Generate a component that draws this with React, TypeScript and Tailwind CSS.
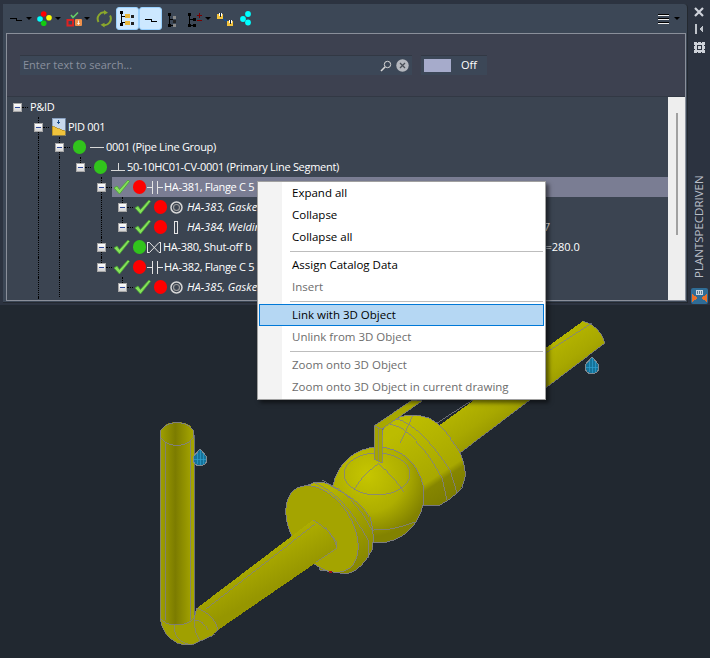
import React from "react";

const font = "font-['Open_Sans','Noto_Sans',sans-serif]";

function Caret() {
  return <svg width="6" height="22" viewBox="0 0 6 22" className="shrink-0"><path d="M0 10h6l-3 3z" fill="#000" /></svg>;
}
function Ic({ x, w, children, className = "" }: { x: number; w: number; children?: React.ReactNode; className?: string }) {
  return <svg width={w} height="22" viewBox={`${x} 7 ${w} 22`} className={`shrink-0 ${className}`} shapeRendering="crispEdges">{children}</svg>;
}
function LineIc({ x }: { x: number }) {
  return <Ic x={x} w={14}><path d={`M${x + 1} 18.5h6v2h6`} stroke="#000" fill="none" /></Ic>;
}

function Toolbar() {
  return (
    <div className="flex items-start h-[29px] pt-[3px] shrink-0">
      <div className="ml-[6px]"><LineIc x={9} /></div>
      <div className="ml-[3px]"><Caret /></div>
      <div className="ml-[4px]">
        <svg width="17" height="22" viewBox="36 7 17 22">
          <circle cx="43.7" cy="14" r="2.8" fill="#f00" /><circle cx="40" cy="19" r="2.8" fill="#0ff" /><circle cx="49" cy="17.7" r="2.8" fill="#ff0" /><circle cx="43.7" cy="23.3" r="2.8" fill="#1c1" />
        </svg>
      </div>
      <div className="ml-[2px]"><Caret /></div>
      <div className="ml-[4px]">
        <svg width="18" height="22" viewBox="65 7 18 22">
          <path d="M71 15l2 2.5 5-5" stroke="#6c6" strokeWidth="1.6" fill="none" />
          <rect x="67.5" y="20" width="5.5" height="5.5" fill="none" stroke="#d22" strokeWidth="2" />
          <rect x="75" y="19" width="7" height="7" rx="1" fill="#f0904a" />
          <path d="M78.5 20.5v3.5M77.3 23l1.2 1.5 1.2-1.5" stroke="#fff" strokeWidth=".8" fill="none" />
        </svg>
      </div>
      <div className="ml-[1px]"><Caret /></div>
      <div className="ml-[5px]">
        <svg width="18" height="22" viewBox="95 7 18 22">
          <path d="M98.5 22a6.5 6.5 0 0 1 7-9.5M110 15.5a6.5 6.5 0 0 1-7 9.5" stroke="#8ba82c" strokeWidth="2" fill="none" />
          <path d="M104 10l4 2.8-4 2zM104.500 27.500l-4-2.800 4-2z" fill="#8ba82c" />
        </svg>
      </div>
      <div className="ml-[3px] w-[23px] h-[23px] rounded-[3px] bg-[#cce8ff] border border-[#99d1ff] flex items-center justify-center">
        <svg width="15" height="15" viewBox="120 12 15 15" shapeRendering="crispEdges">
          <rect x="120" y="12" width="3" height="3" fill="#000" /><rect x="120" y="24" width="3" height="3" fill="#000" />
          <path d="M121.500 15v9M121.500 17.500h5M121.500 23.500h5" stroke="#000" fill="none" />
          <rect x="125" y="15" width="5" height="4" fill="#e8b73a" /><rect x="125" y="22" width="5" height="4" fill="#e8b73a" />
          <rect x="131" y="16" width="3" height="3" fill="#222" /><rect x="131" y="23" width="3" height="3" fill="#222" />
        </svg>
      </div>
      <div className="w-[23px] h-[23px] rounded-[3px] bg-[#cce8ff] border border-[#99d1ff] flex items-center justify-center">
        <Ic x={143} w={14}><path d="M144 18.500h6v2h6" stroke="#000" fill="none" /></Ic>
      </div>
      <div className="ml-[5px]">
        <Ic x={167} w={11}>
          <rect x="168" y="13" width="3" height="3" fill="#000" /><rect x="168" y="24" width="3" height="3" fill="#000" />
          <path d="M169.500 16v8M169.500 19.500h3M169.500 25.500h3" stroke="#000" fill="none" />
          <rect x="173" y="16" width="3" height="3" fill="#888" /><rect x="173" y="20" width="3" height="3" fill="#222" /><rect x="173" y="24" width="3" height="3" fill="#888" />
        </Ic>
      </div>
      <div className="ml-[9px]">
        <Ic x={187} w={16}>
          <rect x="188" y="13" width="3" height="3" fill="#000" /><rect x="188" y="24" width="3" height="3" fill="#000" />
          <path d="M189.500 16v8M189.500 19.500h3M189.500 25.500h3" stroke="#000" fill="none" />
          <rect x="193" y="18" width="3" height="3" fill="#000" /><rect x="193" y="24" width="3" height="3" fill="#000" />
          <path d="M197 15.500h5M199.500 13v5M197 20.500h5" stroke="#7a0000" fill="none" />
        </Ic>
      </div>
      <div className="ml-[2px]"><Caret /></div>
      <div className="ml-[5px]">
        <Ic x={216} w={18}>
          <rect x="217" y="14" width="6" height="5" fill="#f2c23c" /><rect x="219" y="13" width="3" height="3" fill="#fff" /><rect x="220" y="13" width="1" height="4" fill="#123" />
          <rect x="227" y="21" width="6" height="5" fill="#f2c23c" /><rect x="229" y="20" width="3" height="3" fill="#fff" /><rect x="230" y="20" width="1" height="4" fill="#123" />
          <path d="M223 19l4 2" stroke="#1c4f8a" strokeWidth="1.400" fill="none" />
        </Ic>
      </div>
      <div className="ml-[6px]">
        <svg width="12" height="22" viewBox="240 7 12 22">
          <circle cx="248" cy="14" r="2.900" fill="#0ff" /><circle cx="243" cy="19" r="2.900" fill="#0ff" /><circle cx="248" cy="22.500" r="2.900" fill="#0ff" />
        </svg>
      </div>
      <div className="ml-auto flex">
        <Ic x={657} w={12}>
          <path d="M657 14.500h11M657 18.500h11M657 22.500h11" stroke="#000" fill="none" />
          <path d="M657 15.500h11M657 19.500h11M657 23.500h11" stroke="#f0f0f0" fill="none" />
        </Ic>
        <div className="ml-[4px] mr-[7px]"><Caret /></div>
      </div>
    </div>
  );
}

function SearchBar() {
  return (
    <div className="flex items-center h-[62px] pl-[13px] bg-[#3d4150] gap-[9px] shrink-0">
      <div className={`flex items-center w-[392px] h-[20px] bg-[#3c4757] border-t border-[#323844] pl-[3px] pr-[3px] ${font}`}>
        <span className="text-[11px] text-[#8a909e]">Enter text to search...</span>
        <svg className="ml-auto" width="12" height="12" viewBox="0 0 12 12"><circle cx="7.500" cy="4.500" r="3.200" fill="none" stroke="#d8d8d8" /><path d="M5 7L1 11" stroke="#d8d8d8" strokeWidth="1.600" /></svg>
        <svg className="ml-[4px]" width="13" height="13" viewBox="0 0 13 13"><circle cx="6.500" cy="6.500" r="6.200" fill="#b4b7be" /><path d="M4 4l5 5M9 4l-5 5" stroke="#4a4f58" strokeWidth="1.300" /></svg>
      </div>
      <div className={`flex items-center w-[66px] h-[20px] bg-[#3c4757] border-t border-[#323844] pl-[3px] ${font}`}>
        <div className="w-[27px] h-[13px] bg-[#a6abcb]" />
        <span className="ml-[10px] text-[11px] text-white">Off</span>
      </div>
    </div>
  );
}

function Box() {
  return (
    <div className="relative z-10 w-[9px] h-[9px] bg-gradient-to-b from-[#ffffff] to-[#d4d4d4] border border-[#a6a6a6] flex items-center justify-center">
      <div className="w-[5px] h-[1px] bg-[#2f4a9c]" />
    </div>
  );
}
function Check() {
  return (
    <svg width="17" height="16" viewBox="0 0 17 16" className="shrink-0">
      <path d="M1 9L4 7 6.500 10.500 15 1 16.500 2.500 6.500 15z" fill="#86e05a" stroke="#45a532" strokeWidth=".8" strokeLinejoin="round" />
    </svg>
  );
}
function Sym({ kind }: { kind: string }) {
  if (kind === "dash") return <svg width="14" height="10" viewBox="0 0 14 10" className="shrink-0 ml-[3px] mr-[1px]" shapeRendering="crispEdges"><path d="M0 5.500h14" stroke="#d8d8d8" /></svg>;
  if (kind === "tee") return <svg width="14" height="14" viewBox="0 0 14 14" className="shrink-0 ml-[3px] mr-[2px]" shapeRendering="crispEdges"><path d="M0 10.500h14M7.500 3v7" stroke="#d8d8d8" /></svg>;
  if (kind === "flange") return <svg width="16" height="14" viewBox="0 0 16 14" className="shrink-0 mr-[1px]" shapeRendering="crispEdges"><path d="M0 7.500h5M5.500 1v13M10.500 1v13M11 7.500h5" stroke="#e4e4e4" /></svg>;
  if (kind === "ring") return <svg width="13" height="13" viewBox="0 0 13 13" className="shrink-0 ml-[2px] mr-[4px]"><circle cx="6.500" cy="6.500" r="5.500" fill="none" stroke="#d8d8d8" strokeWidth="1.500" /><circle cx="6.500" cy="6.500" r="3" fill="none" stroke="#9a9a9a" strokeWidth="1.200" /></svg>;
  if (kind === "bar") return <svg width="13" height="13" viewBox="0 0 13 13" className="shrink-0 ml-[2px] mr-[4px]" shapeRendering="crispEdges"><rect x="4.500" y=".5" width="3" height="12" fill="none" stroke="#e4e4e4" /></svg>;
  return <svg width="14" height="13" viewBox="0 0 14 13" className="shrink-0 mr-[2px]"><path d="M.5 1.500h2L12 11.500h1.500M.5 11.500h2L12 1.500h1.500M.5 1v11M13.500 1v11" stroke="#e4e4e4" fill="none" /></svg>;
}
function DocIc() {
  return (
    <svg width="15" height="18" viewBox="0 0 15 18" className="shrink-0" shapeRendering="crispEdges">
      <rect x="1" y="0" width="13" height="17" fill="#c7d9ee" stroke="#7a93b5" strokeWidth=".8" />
      <path d="M6 4h3M7.500 2v4" stroke="#1f4f8a" />
      <path d="M1 8l13 5v4H1z" fill="#f0c33c" stroke="#a07c10" strokeWidth=".6" />
    </svg>
  );
}

type Row = {
  cells: (0 | 1)[];
  box: number;
  up?: boolean;
  down?: boolean;
  sel?: boolean;
  check?: boolean;
  circle?: string;
  sym?: string;
  doc?: boolean;
  text?: string;
  italic?: boolean;
  tail?: string;
  tailAt?: number;
};

const rows: Row[] = [
  { cells: [], box: 0, text: "P&ID" },
  { cells: [], box: 1, up: true, down: true, doc: true, text: "PID 001" },
  { cells: [0, 1], box: 2, up: true, down: true, circle: "bg-[#31c41c]", sym: "dash", text: "0001 (Pipe Line Group)" },
  { cells: [0, 1, 1], box: 3, up: true, circle: "bg-[#31c41c]", sym: "tee", text: "50-10HC01-CV-0001 (Primary Line Segment)" },
  { cells: [0, 1, 1, 0], box: 4, up: true, down: true, sel: true, check: true, circle: "bg-[#f00]", sym: "flange", text: "HA-381, Flange C 5" },
  { cells: [0, 1, 1, 0, 1], box: 5, up: true, check: true, circle: "bg-[#f00]", sym: "ring", text: "HA-383, Gasket", italic: true },
  { cells: [0, 1, 1, 0, 1], box: 5, up: true, check: true, circle: "bg-[#f00]", sym: "bar", text: "HA-384, Welding", italic: true, tail: "7", tailAt: 277 },
  { cells: [0, 1, 1, 0], box: 4, up: true, down: true, check: true, circle: "bg-[#31c41c]", sym: "valve", text: "HA-380, Shut-off b", tail: "=280.0", tailAt: 294 },
  { cells: [0, 1, 1, 0], box: 4, up: true, check: true, circle: "bg-[#f00]", sym: "flange", text: "HA-382, Flange C 5" },
  { cells: [0, 1, 1, 0, 0], box: 5, up: true, check: true, circle: "bg-[#f00]", sym: "ring", text: "HA-385, Gasket", italic: true },
  { cells: [0, 1, 1], box: 2, circle: "bg-[#31c41c]" },
];

function V({ half }: { half?: "up" | "down" }) {
  const pos = half === "up" ? "top-0 h-1/2" : half === "down" ? "bottom-0 h-1/2" : "top-0 h-full";
  return <div className={`absolute left-[10px] w-0 border-l border-dotted border-black ${pos}`} />;
}

function TreeRow({ r }: { r: Row }) {
  const cols = [];
  for (let i = 0; i < r.box; i++) {
    cols.push(<div key={i} className="relative w-[21px] shrink-0 h-full">{r.cells[i] ? <V /> : null}</div>);
  }
  return (
    <div className="flex items-center h-[20px] shrink-0">
      {cols}
      <div className="relative w-[21px] shrink-0 h-full flex items-center pl-[6px]">
        {r.up ? <V half="up" /> : null}
        {r.down ? <V half="down" /> : null}
        <Box />
        <div className="absolute left-[15px] top-[10px] w-[6px] border-t border-dotted border-black" />
      </div>
      <div className={`flex items-center h-full flex-1 min-w-0 pl-[2px] ${r.sel ? "bg-[#7a7d93]" : ""}`}>
        {r.check ? <div className="mr-[3px] ml-[-1px]"><Check /></div> : null}
        {r.doc ? <div className="mr-[2px]"><DocIc /></div> : null}
        {r.circle ? <div className={`w-[13px] h-[14px] rounded-full shrink-0 mr-[1px] ${r.check ? "" : "ml-[1px]"} ${r.circle}`} /> : null}
        {r.sym ? <Sym kind={r.sym} /> : null}
        {r.text ? <span className={`text-[11px] text-white whitespace-nowrap ${r.sym === "dash" ? "ml-[1px]" : ""} ${r.italic ? "italic" : "tracking-[-0.3px]"}`}>{r.text}</span> : null}
        {r.tail ? <span className="text-[11px] text-white whitespace-nowrap" style={{ marginLeft: r.tailAt }}>{r.tail}</span> : null}
      </div>
    </div>
  );
}

function Tree() {
  return (
    <div className={`flex flex-1 min-h-0 border-t border-[#323844] ${font}`}>
      <div className="flex-1 min-w-0 bg-[#3b4451] flex flex-col overflow-hidden">
        <div className="flex flex-col">
          {rows.map((r, i) => <TreeRow key={i} r={r} />)}
        </div>
      </div>
      <div className="w-[17px] bg-[#eeeeee] flex justify-center pt-[16px] shrink-0">
        <div className="w-[2px] h-[122px] bg-[#a0a0a0]" />
      </div>
    </div>
  );
}

function Menu() {
  const base = "h-[22px] flex items-center whitespace-nowrap text-[11.5px]";
  const on = `${base} pl-[34px] text-black`;
  const off = `${base} pl-[34px] text-[#6d6d6d]`;
  const sep = "h-[1px] bg-[#bdbdbd] ml-[32px] mr-[2px] mt-[3px] mb-[2px]";
  return (
    <div className={`absolute left-[257px] top-[181px] w-[289px] h-[219px] z-20 bg-white border border-[#a0a0a0] shadow-[3px_3px_4px_rgba(0,0,0,0.5)] ${font}`}>
      <div className="absolute left-0 top-0 bottom-0 w-[24px] bg-[#f3f3f3]" />
      <div className="relative">
        <div className={on}>Expand all</div>
        <div className={on}>Collapse</div>
        <div className={on}>Collapse all</div>
        <div className={sep} />
        <div className={on}>Assign Catalog Data</div>
        <div className={off}>Insert</div>
        <div className={sep} />
        <div className={`${base} text-black bg-[#b5d7f3] border border-[#0078d7] mx-[1px] pl-[32px]`}>Link with 3D Object</div>
        <div className={off}>Unlink from 3D Object</div>
        <div className={sep} />
        <div className={off}>Zoom onto 3D Object</div>
        <div className={off}>Zoom onto 3D Object in current drawing</div>
      </div>
    </div>
  );
}

function Sidebar() {
  return (
    <div className="w-[22px] shrink-0 bg-[#2c3340] flex flex-col items-center pt-[3px]">
      <svg width="10" height="10" viewBox="0 0 10 10"><path d="M1 1l8 8M9 1L1 9" stroke="#cfd3da" strokeWidth="2.200" /></svg>
      <svg width="9" height="10" viewBox="0 0 9 10" className="mt-[7px]" shapeRendering="crispEdges"><rect x="0" y="0" width="2" height="10" fill="#bfc3ca" /><path d="M8 2v6L4 5z" fill="#bfc3ca" /></svg>
      <svg width="11" height="11" viewBox="0 0 11 11" className="mt-[8px]" shapeRendering="crispEdges">
        <path d="M0 0h3v1h1V0h3v1h1V0h3v3h-1v1h1v3h-1v1h1v3H8v-1H7v1H4v-1H3v1H0V8h1V7H0V4h1V3H0z" fill="#cfd3da" /><rect x="3" y="3" width="5" height="5" fill="#2c3340" /><rect x="4" y="4" width="3" height="3" fill="#cfd3da" />
      </svg>
      <div className={`mt-[121px] h-[104px] text-[11.5px] leading-[22px] text-[#b9bec8] [writing-mode:vertical-rl] rotate-180 whitespace-nowrap text-left ${font}`}>PLANTSPECDRIVEN</div>
      <div className="mt-[10px] w-[17px] h-[16px] rounded-[2px] bg-[#2f6c96] flex items-center justify-center">
        <svg width="15" height="12" viewBox="0 0 15 12" shapeRendering="crispEdges">
          <rect x="4" y="0" width="7" height="5" fill="#c8d4de" /><path d="M5.500 1v3M7.500 1v3M9.500 1v3" stroke="#5a7a92" />
          <path d="M0 4l6 4-6 4zM15 4L9 8l6 4z" fill="#e8702a" />
        </svg>
      </div>
    </div>
  );
}

function Drop({ x, y }: { x: number; y: number }) {
  return (
    <g transform={`translate(${x} ${y})`}>
      <path d="M0 -9C2 -6 7 -3 7 1A7 7 0 0 1 -7 1C-7 -3 -2 -6 0 -9Z" fill="#15739a" stroke="#7f8a92" />
      <path d="M-6 1H6M0 -8V7M-3 -5V6M3 -5V6" stroke="#2f9fd0" strokeWidth=".7" />
    </g>
  );
}

function Model() {
  const w = "#80808a";
  return (
    <svg className="w-full h-full block" viewBox="0 305 710 353" shapeRendering="crispEdges">
      <defs>
        <linearGradient id="vp" gradientUnits="userSpaceOnUse" x1="160" y1="0" x2="194" y2="0">
          <stop offset="0" stopColor="#a0a000" /><stop offset=".45" stopColor="#7c7c00" /><stop offset="1" stopColor="#a8a800" />
        </linearGradient>
        <linearGradient id="dp" gradientUnits="userSpaceOnUse" x1="250" y1="555" x2="270" y2="590">
          <stop offset="0" stopColor="#aeae00" /><stop offset="1" stopColor="#969600" />
        </linearGradient>
        <linearGradient id="rp" gradientUnits="userSpaceOnUse" x1="505" y1="372" x2="530" y2="408">
          <stop offset="0" stopColor="#b6b600" /><stop offset=".6" stopColor="#a8a800" /><stop offset="1" stopColor="#989800" />
        </linearGradient>
        <radialGradient id="ball" gradientUnits="userSpaceOnUse" cx="368" cy="475" r="62">
          <stop offset="0" stopColor="#c6c600" /><stop offset=".6" stopColor="#aeae00" /><stop offset="1" stopColor="#828200" />
        </radialGradient>
        <linearGradient id="fl2" gradientUnits="userSpaceOnUse" x1="400" y1="430" x2="450" y2="505">
          <stop offset="0" stopColor="#bcbc00" /><stop offset=".65" stopColor="#a8a800" /><stop offset=".72" stopColor="#868600" /><stop offset="1" stopColor="#7a7a00" />
        </linearGradient>
        <linearGradient id="fl1" gradientUnits="userSpaceOnUse" x1="330" y1="490" x2="372" y2="560">
          <stop offset="0" stopColor="#b4b400" /><stop offset="1" stopColor="#868600" />
        </linearGradient>
      </defs>

      <path d="M437 427L583 321Q600 326 605 343L457 455Z" fill="url(#rp)" />
      <path d="M583 321Q600 326 605 343M437 423L592 323M460 453L605 343" stroke={w} fill="none" strokeWidth=".8" />
      <Drop x={592} y={366} />

      <path d="M382 448Q380 428 387 425Q400 414 413 415Q428 416 437 423Q452 437 460 453Q466 466 465 477Q463 488 457 493Q450 500 440 505L423 505Z" fill="url(#fl2)" stroke={w} strokeWidth=".9" />
      <path d="M397 419Q420 425 450 470L457 493M390 424Q416 430 442 478L447 500M413 415L404 435L400 443" stroke={w} fill="none" strokeWidth=".8" />

      <path d="M374 426L412 400L422 401L382 429Z" fill="#a8a800" stroke={w} strokeWidth=".8" />

      <ellipse cx="378" cy="495" rx="46" ry="48" fill="url(#ball)" stroke={w} strokeWidth=".9" />
      <ellipse cx="377" cy="474" rx="33" ry="21" fill="none" stroke={w} strokeWidth=".8" />
      <path d="M378 463Q362 475 354 490M378 463Q395 478 404 492M415 522Q392 531 374 530Q365 532 352 526" stroke={w} fill="none" strokeWidth=".8" />

      <path d="M374 426L382 429V463L374 459Z" fill="#a4a400" stroke={w} strokeWidth=".8" />
      <path d="M378 428V461" stroke={w} strokeWidth=".6" />

      <path d="M308 485Q322 478 333 487Q362 502 370 517Q375 535 372 550Q362 570 347 574L320 570Z" fill="url(#fl1)" stroke={w} strokeWidth=".9" />
      <path d="M313 482Q345 495 368 540L368 558M322 480Q355 495 372 530" stroke={w} fill="none" strokeWidth=".8" />
      <ellipse cx="322" cy="529" rx="30" ry="48" transform="rotate(-33 322 529)" fill="#a4a400" stroke={w} strokeWidth=".9" />

      <path d="M197 608L313 520Q332 530 337 547L317 562L218 630Z" fill="url(#dp)" />
      <path d="M206 609L315 524M313 520Q332 530 337 547" stroke={w} fill="none" strokeWidth=".8" />
      <path d="M316 562L337 548L336 541L325 527" stroke={w} fill="none" strokeWidth=".7" />

      <path d="M160 618Q162 635 177 643Q190 648 200 641Q212 637 218 630Q215 615 197 608L194 618Z" fill="#a0a000" stroke={w} strokeWidth=".8" />
      <path d="M197 608Q190 625 200 641M175 625Q172 640 190 645M194 620Q204 620 208 630" stroke={w} fill="none" strokeWidth=".7" />

      <path d="M160 435Q162 422 177 422Q193 422 194 435V618Q188 625 177 625Q165 625 160 618Z" fill="url(#vp)" />
      <path d="M160 435V618Q165 625 177 625Q188 625 194 618V435M165 438V620M190 436V620" stroke={w} fill="none" strokeWidth=".8" />
      <ellipse cx="177" cy="434" rx="17" ry="11.500" fill="url(#vp)" stroke={w} strokeWidth=".9" />
      <Drop x={200} y={458} />
      <rect x="329" y="571" width="3" height="2" fill="#a0101c" />
    </svg>
  );
}

export default function App() {
  return (
    <div className="relative w-[710px] h-[658px] bg-[#212830] overflow-hidden flex flex-col">
      <div className="flex h-[305px] shrink-0 bg-[#2c3340] pt-[4px]">
        <div className="ml-[3px] w-[685px] h-[299px] bg-[#3c4756] rounded-tr-[4px] border-b border-r border-[#23282f] flex flex-col">
          <Toolbar />
          <div className="ml-[3px] mr-[1px] mb-[1px] flex-1 min-h-0 flex flex-col border border-[#8a8f9a]">
            <SearchBar />
            <Tree />
          </div>
        </div>
        <Sidebar />
      </div>
      <div className="flex-1 min-h-0"><Model /></div>
      <Menu />
    </div>
  );
}
